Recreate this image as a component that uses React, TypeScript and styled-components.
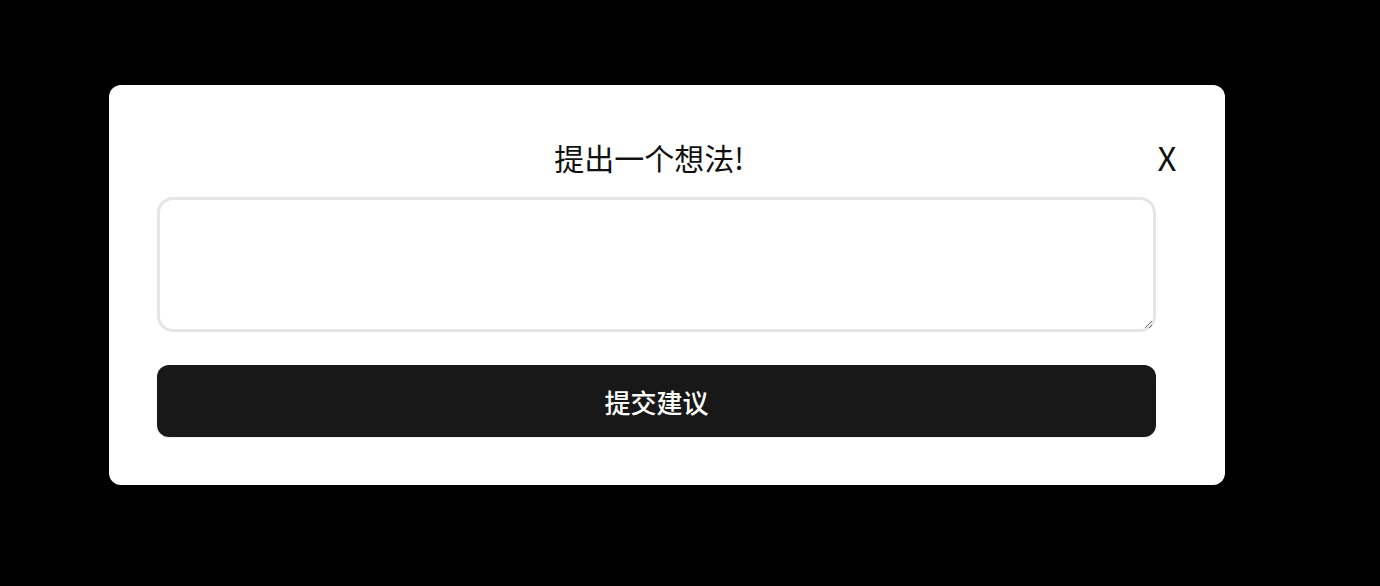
import React from "react";
import styled, { createGlobalStyle } from "styled-components";

const Global = createGlobalStyle`
  html, body {
    margin: 0;
    padding: 0;
    background: #000;
  }
  body {
    font-family: "Noto Sans CJK SC", "Noto Sans", sans-serif;
  }
  * { box-sizing: border-box; }
`;

const Backdrop = styled.div`
  width: 1380px;
  height: 586px;
  background: #000;
  padding: 85px 0 0 109px;
`;

const Modal = styled.div`
  width: 1116px;
  height: 400px;
  background: #fff;
  border-radius: 12px;
  padding: 48px;
  display: flex;
  flex-direction: column;
`;

const Header = styled.div`
  display: flex;
  align-items: center;
  gap: 16px;
  height: 48px;
  margin-bottom: 16px;
`;

const Title = styled.h2`
  flex: 1;
  margin: 0;
  text-align: center;
  font-size: 30px;
  font-weight: 400;
  color: #111;
  line-height: 48px;
`;

const Close = styled.button`
  border: none;
  background: none;
  padding: 0;
  width: 20px;
  font-family: "Noto Sans CJK SC", sans-serif;
  font-size: 33px;
  line-height: 48px;
  color: #111;
  cursor: pointer;
`;

const Field = styled.textarea`
  width: 999px;
  height: 135px;
  border: 3px solid #e5e5e5;
  border-radius: 16px;
  padding: 12px 16px;
  font-family: inherit;
  font-size: 18px;
  outline: none;
  resize: vertical;
  margin: 0;
`;

const Submit = styled.button`
  margin-top: 33px;
  width: 999px;
  height: 72px;
  border: none;
  border-radius: 12px;
  background: #181818;
  color: #fff;
  font-family: "Noto Sans CJK SC", sans-serif;
  font-size: 26px;
  font-weight: 500;
  box-shadow: 0 1px 2px rgba(0, 0, 0, 0.08);
  cursor: pointer;
`;

export default function App() {
  return (
    <>
      <Global />
      <Backdrop>
        <Modal>
          <Header>
            <Title>提出一个想法!</Title>
            <Close>X</Close>
          </Header>
          <Field />
          <Submit>提交建议</Submit>
        </Modal>
      </Backdrop>
    </>
  );
}
